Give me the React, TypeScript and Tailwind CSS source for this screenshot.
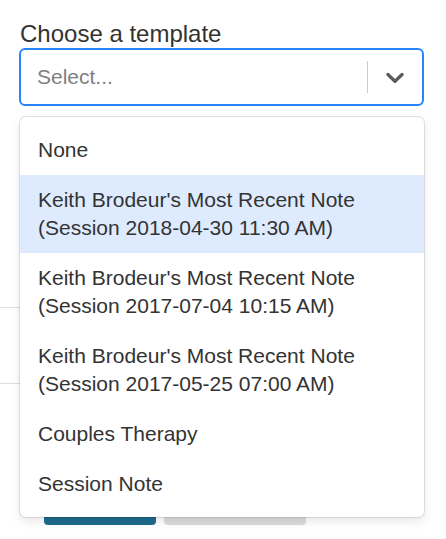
const options = [
  { label: 'None' },
  { label: "Keith Brodeur's Most Recent Note (Session 2018-04-30 11:30 AM)", focused: true },
  { label: "Keith Brodeur's Most Recent Note (Session 2017-07-04 10:15 AM)" },
  { label: "Keith Brodeur's Most Recent Note (Session 2017-05-25 07:00 AM)" },
  { label: 'Couples Therapy' },
  { label: 'Session Note' },
];

function Chevron() {
  return (
    <svg viewBox="0 0 20 20" className="w-[30px] h-[30px] fill-[#5a5a5a]">
      <path d="M4.516 7.548c0.436-0.446 1.043-0.481 1.576 0l3.908 3.747 3.908-3.747c0.533-0.481 1.141-0.446 1.574 0 0.436 0.445 0.408 1.197 0 1.615-0.406 0.418-4.695 4.502-4.695 4.502-0.217 0.223-0.502 0.335-0.787 0.335s-0.57-0.112-0.789-0.335c0 0-4.287-4.084-4.695-4.502s-0.436-1.17 0-1.615z" />
    </svg>
  );
}

export default function App() {
  return (
    <div className="relative min-h-[539px] bg-white text-[#333] font-['Liberation_Sans',Arial,sans-serif]">
      {/* Form */}
      <div className="pl-[19px] pr-[22px] pt-[20px]">
        <label className="block pl-[1px] text-[24px] leading-[28px]">Choose a template</label>
        <div className="flex items-center h-[58px] border-2 border-[#2684ff] rounded-[6px] bg-white">
          <span className="flex-1 pl-[16px] text-[21px] leading-[28px] text-[#808080]">Select...</span>
          <span className="w-px h-[32px] bg-[#cccccc]" />
          <div className="px-[12px] flex items-center">
            <Chevron />
          </div>
        </div>
      </div>

      {/* Content under the menu */}
      <div className="mt-[201px] w-[400px] h-[77px] border-y border-[#dedede]" />
      <div className="flex items-end gap-[8px] pl-[44px] mt-[101px]">
        <div className="w-[112px] h-[38px] rounded-[4px] bg-[#1e6b8c]" />
        <div className="w-[142px] h-[40px] rounded-[4px] bg-[#dcdcdc]" />
      </div>

      {/* Open menu */}
      <div className="absolute left-[20px] top-[117px] w-[404px] py-[8px] rounded-[6px] bg-white shadow-[0_0_0_1px_rgba(0,0,0,0.1),0_4px_11px_rgba(0,0,0,0.1)]">
        {options.map((o) => (
          <div
            key={o.label}
            className={`px-[18px] py-[11px] text-[21px] leading-[28px] text-[#333] ${o.focused ? 'bg-[#deebff]' : ''}`}
          >
            {o.label.includes('(') ? (
              <>
                {o.label.slice(0, o.label.indexOf('(') - 1)}
                <br />
                {o.label.slice(o.label.indexOf('('))}
              </>
            ) : (
              o.label
            )}
          </div>
        ))}
      </div>
    </div>
  );
}
